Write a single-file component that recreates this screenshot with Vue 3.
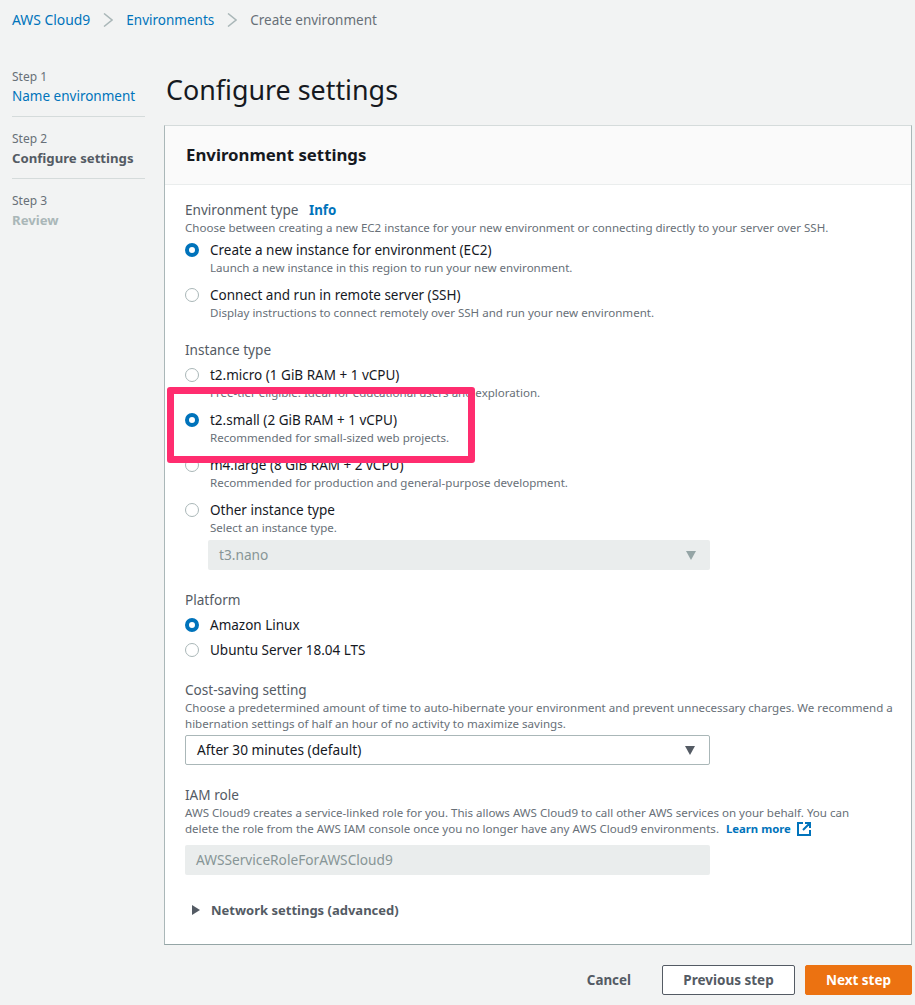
<template>
  <div class="page">
    <nav class="crumbs">
      <a class="link root">AWS Cloud9</a>
      <svg class="sep" width="10" height="14" viewBox="0 0 10 14"><path d="M1 .5L9 7l-8 6.500" fill="none" stroke="#aab7b8" stroke-width="1.500" /></svg>
      <a class="link">Environments</a>
      <svg class="sep" width="10" height="14" viewBox="0 0 10 14"><path d="M1 .5L9 7l-8 6.500" fill="none" stroke="#aab7b8" stroke-width="1.500" /></svg>
      <span class="crumb-current">Create environment</span>
    </nav>

    <div class="main">
      <aside class="steps">
        <div v-for="step in steps" :key="step.num" class="step">
          <div class="step-num">Step {{ step.num }}</div>
          <div class="step-name" :class="step.state">{{ step.name }}</div>
        </div>
      </aside>

      <div class="content">
        <h1 class="title">Configure settings</h1>

        <section class="card">
          <header class="card-head">Environment settings</header>
          <div class="card-body">
            <div class="field env">
              <div class="label">Environment type <a class="info">Info</a></div>
              <div class="hint">Choose between creating a new EC2 instance for your new environment or connecting directly to your server over SSH.</div>
              <div class="radios first">
                <div v-for="o in envOptions" :key="o.title" class="radio-row">
                  <span class="radio" :class="{ on: o.on }"></span>
                  <div>
                    <div class="radio-title">{{ o.title }}</div>
                    <div class="hint">{{ o.desc }}</div>
                  </div>
                </div>
              </div>
            </div>

            <div class="field">
              <div class="label">Instance type</div>
              <div class="radios second">
                <div v-for="o in instanceOptions" :key="o.title" class="radio-row">
                  <span class="radio" :class="{ on: o.on }"></span>
                  <div>
                    <div class="radio-title">{{ o.title }}</div>
                    <div class="hint">{{ o.desc }}</div>
                  </div>
                </div>
              </div>
              <div class="select disabled nested">
                <span>t3.nano</span>
                <span class="caret"></span>
              </div>
              <div class="highlight"></div>
            </div>

            <div class="field">
              <div class="label">Platform</div>
              <div class="radios tight">
                <div class="radio-row"><span class="radio on"></span><div class="radio-title">Amazon Linux</div></div>
                <div class="radio-row"><span class="radio"></span><div class="radio-title">Ubuntu Server 18.04 LTS</div></div>
              </div>
            </div>

            <div class="field">
              <div class="label">Cost-saving setting</div>
              <div class="hint wide">Choose a predetermined amount of time to auto-hibernate your environment and prevent unnecessary charges. We recommend a hibernation settings of half an hour of no activity to maximize savings.</div>
              <div class="select active">
                <span>After 30 minutes (default)</span>
                <span class="caret dark"></span>
              </div>
            </div>

            <div class="field">
              <div class="label">IAM role</div>
              <div class="hint wide iam">AWS Cloud9 creates a service-linked role for you. This allows AWS Cloud9 to call other AWS services on your behalf. You can delete the role from the AWS IAM console once you no longer have any AWS Cloud9 environments. <a class="learn">Learn more</a>
                <svg class="ext" width="14" height="14" viewBox="0 0 14 14"><path d="M6 1H1v12h12V8M8 1h5v5M13 1L6 8" fill="none" stroke="#0073bb" stroke-width="2" /></svg>
              </div>
              <div class="select disabled role">AWSServiceRoleForAWSCloud9</div>
            </div>

            <div class="network">
              <span class="tri"></span>
              <span>Network settings (advanced)</span>
            </div>
          </div>
        </section>

        <footer class="actions">
          <a class="cancel">Cancel</a>
          <button class="btn prev">Previous step</button>
          <button class="btn next">Next step</button>
        </footer>
      </div>
    </div>
  </div>
</template>

<script setup>
const steps = [
  { num: 1, name: 'Name environment', state: 'done' },
  { num: 2, name: 'Configure settings', state: 'current' },
  { num: 3, name: 'Review', state: 'todo' },
]

const envOptions = [
  { title: 'Create a new instance for environment (EC2)', desc: 'Launch a new instance in this region to run your new environment.', on: true },
  { title: 'Connect and run in remote server (SSH)', desc: 'Display instructions to connect remotely over SSH and run your new environment.' },
]

const instanceOptions = [
  { title: 't2.micro (1 GiB RAM + 1 vCPU)', desc: 'Free-tier eligible. Ideal for educational users and exploration.' },
  { title: 't2.small (2 GiB RAM + 1 vCPU)', desc: 'Recommended for small-sized web projects.', on: true },
  { title: 'm4.large (8 GiB RAM + 2 vCPU)', desc: 'Recommended for production and general-purpose development.' },
  { title: 'Other instance type', desc: 'Select an instance type.' },
]
</script>

<style>
html, body {
  background: #f2f3f3;
}
</style>

<style scoped>
.page {
  height: 1005px;
  overflow: hidden;
  box-sizing: border-box;
  font-family: "Noto Sans", "Liberation Sans", sans-serif;
  font-size: 13.5px;
  line-height: 20px;
  color: #16191f;
  background: #f2f3f3;
}

.crumbs {
  display: flex;
  align-items: center;
  height: 20px;
  padding: 10px 0 0 12px;
}

.link { color: #0073bb; }
.link.root { font-size: 13.9px; }
.sep { margin: 0 13px; }
.crumb-current { color: #687078; }

.main {
  display: flex;
  padding: 36px 3px 0 12px;
}

.steps {
  width: 133px;
  margin-right: 19px;
  flex: none;
}

.step {
  padding: 0 0 10px;
  margin-bottom: 11px;
  border-bottom: 1px solid #d5dbdb;
  height: 40px;
}

.step:last-child { border-bottom: none; }

.step-num {
  height: 20px;
  font-size: 12px;
  line-height: 22px;
  color: #687078;
}

.step-name.done { color: #0073bb; }
.step-name.current { color: #545b64; font-weight: 700; font-size: 13.2px; }
.step-name.todo { color: #aab7b8; font-weight: 700; font-size: 13.2px; }

.content {
  flex: 1;
  min-width: 0;
}

.title {
  margin: 0 0 11px 2px;
  font-size: 26.85px;
  line-height: 48px;
  font-weight: 400;
  color: #16191f;
}

.card {
  background: #fff;
  border: 1px solid #d5dbdb;
  border-bottom-color: #95a5a6;
  border-left-color: #aab7b8;
  border-right-color: #aab7b8;
  box-sizing: border-box;
  height: 820px;
}

.card-head {
  height: 58px;
  padding: 0 21px;
  line-height: 58px;
  font-size: 16.8px;
  font-weight: 700;
  background: #fafafa;
  border-bottom: 1px solid #eaeded;
}

.card-body {
  padding: 15px 20px 0;
}

.field { margin-bottom: 20px; position: relative; }
.field.env { margin-bottom: 19px; }

.label { color: #545b64; font-size: 13.6px; }

.info {
  margin-left: 7px;
  color: #0073bb;
  font-weight: 700;
  font-size: 13.3px;
}

.hint {
  font-size: 11.55px;
  line-height: 16px;
  color: #687078;
  white-space: nowrap;
}

.hint.wide { white-space: normal; width: 712px; line-height: 15.5px; }
.hint.iam { width: 700px; line-height: 16px; }

.radios { display: flex; flex-direction: column; gap: 9px; }
.radios.first { margin-top: 4px; }
.radios.second { margin-top: 5px; }
.radios.tight { margin-top: 5px; gap: 5px; }

.radio-row {
  display: flex;
  align-items: flex-start;
}

.radio {
  flex: none;
  width: 14px;
  height: 14px;
  margin: 3px 11px 0 0;
  box-sizing: border-box;
  border: 1.5px solid #aab7b8;
  border-radius: 50%;
  background: #fff;
}

.radio.on {
  background: #fff;
  border: 4px solid #0073bb;
}

.radio-title { color: #16191f; }

.select {
  display: flex;
  align-items: center;
  justify-content: space-between;
  box-sizing: border-box;
  height: 30px;
  width: 525px;
  padding: 0 14px 0 11px;
  margin-top: 5px;
  border-radius: 2px;
  font-size: 13.7px;
}

.select.disabled {
  background: #eaeded;
  color: #879596;
}

.select.nested { width: 502px; margin: 4px 0 0 23px; }

.select.active {
  margin-top: 4px;
  border: 1px solid #aab7b8;
  background: #fff;
  color: #16191f;
}

.select.role { margin-top: 8px; }

.caret {
  width: 0;
  height: 0;
  border-left: 5.5px solid transparent;
  border-right: 5.5px solid transparent;
  border-top: 9px solid #95a5a6;
}

.caret.dark { border-top-color: #545b64; }

.learn { margin-left: 4px; color: #0073bb; font-weight: 700; font-size: 11.3px; }
.ext { vertical-align: -3px; margin-left: 6px; }

.network {
  display: flex;
  align-items: center;
  margin-top: 25px;
  color: #545b64;
  font-weight: 700;
  font-size: 13px;
}

.tri {
  width: 0;
  height: 0;
  margin: 0 11px 0 7px;
  border-top: 5px solid transparent;
  border-bottom: 5px solid transparent;
  border-left: 8px solid #545b64;
}

.highlight {
  position: absolute;
  left: -18px;
  top: 47px;
  width: 308px;
  height: 76px;
  box-sizing: border-box;
  border: 7px solid #ff2d6f;
  border-radius: 3px;
  pointer-events: none;
}

.actions {
  display: flex;
  align-items: center;
  justify-content: flex-end;
  margin-top: 20px;
}

.cancel {
  margin-right: 31px;
  color: #545b64;
  font-weight: 700;
  font-size: 13.4px;
}

.btn {
  height: 30px;
  box-sizing: border-box;
  border-radius: 2px;
  font-family: inherit;
  font-size: 13.5px;
  font-weight: 700;
}

.prev {
  width: 133px;
  margin-right: 10px;
  background: #fff;
  color: #545b64;
  border: 1px solid #545b64;
}

.next {
  width: 107px;
  background: #ec7211;
  color: #fff;
  border: 1px solid #ec7211;
}
</style>
